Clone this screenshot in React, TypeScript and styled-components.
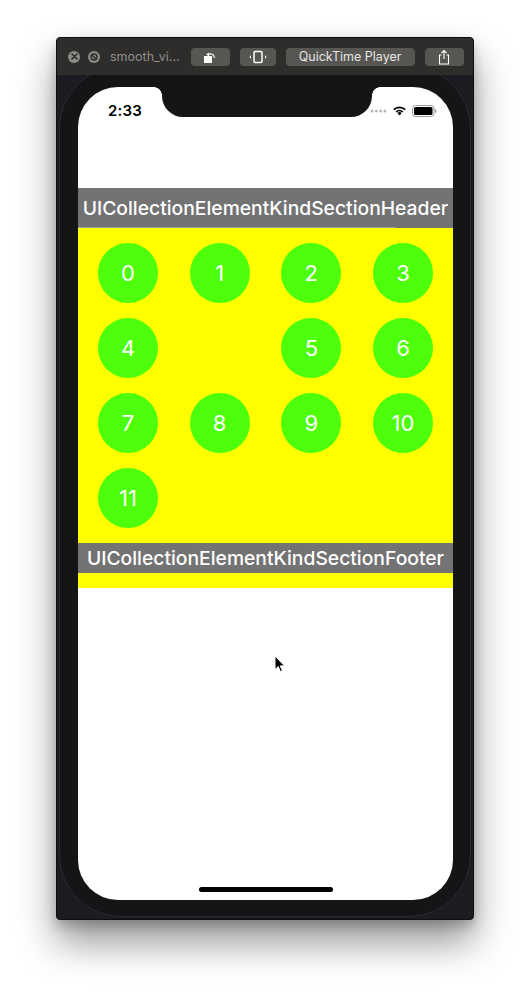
import React from "react";
import styled, { createGlobalStyle } from "styled-components";

const Global = createGlobalStyle`
  html, body { margin: 0; padding: 0; background: #ffffff; }
  body { font-family: "Inter", "Roboto", "Liberation Sans", sans-serif; }
`;

const Page = styled.div`
  width: 530px;
  height: 994px;
  padding: 37px 0 0 56px;
  box-sizing: border-box;
  background: #ffffff;
`;

const Window = styled.div`
  width: 418px;
  height: 883px;
  box-sizing: border-box;
  border: 1px solid #0e0e0e;
  border-radius: 4px;
  background: #1c1b21;
  display: flex;
  flex-direction: column;
  overflow: hidden;
  box-shadow: 0 22px 38px rgba(0, 0, 0, 0.42), 0 6px 12px rgba(0, 0, 0, 0.2);
`;

const TitleBar = styled.div`
  height: 37px;
  flex: none;
  background: #2e2d2b;
  display: flex;
  align-items: center;
  padding: 0 8px 0 11px;
  box-sizing: border-box;
  position: relative;
  z-index: 2;
`;

const Dot = styled.div`
  width: 12px;
  height: 12px;
  border-radius: 50%;
  background: #8c8b88;
  display: flex;
  align-items: center;
  justify-content: center;
  margin-right: 8px;
`;

const Title = styled.div`
  color: #8f8e8b;
  font-family: "Inter", "Liberation Sans", sans-serif;
  font-size: 12.5px;
  margin: 0 11px 0 2px;
  white-space: nowrap;
`;

const TBtn = styled.div<{ $w: number }>`
  width: ${(p) => p.$w}px;
  height: 18px;
  border-radius: 4px;
  background: #575652;
  color: #e6e5e2;
  font-family: "Inter", "Liberation Sans", sans-serif;
  font-size: 12.5px;
  display: flex;
  align-items: center;
  justify-content: center;
  margin-right: 10px;
  &:last-child { margin-right: 0; }
`;

const Bezel = styled.div`
  flex: 1;
  padding: 0 2px 2px 2px;
  display: flex;
  flex-direction: column;
  overflow: hidden;
`;

const PhoneBody = styled.div`
  flex: 1;
  margin-top: -9px;
  border: 1px solid #2c2b31;
  border-radius: 62px;
  background: #151417;
  padding: 20px 17px 16px 18px;
  display: flex;
  flex-direction: column;
`;

const Screen = styled.div`
  flex: 1;
  background: #ffffff;
  border-radius: 40px;
  overflow: hidden;
  position: relative;
  display: flex;
  flex-direction: column;
`;

const Notch = styled.div`
  position: absolute;
  top: 0;
  left: 84px;
  width: 210px;
  height: 30px;
  background: #151417;
  border-radius: 0 0 21px 21px;
  &::before, &::after {
    content: "";
    position: absolute;
    top: 0;
    width: 8px;
    height: 8px;
  }
  &::before {
    left: -8px;
    background: radial-gradient(circle at 0 100%, transparent 7.5px, #151417 8px);
  }
  &::after {
    right: -8px;
    background: radial-gradient(circle at 100% 100%, transparent 7.5px, #151417 8px);
  }
`;

const StatusBar = styled.div`
  height: 44px;
  flex: none;
  display: flex;
  align-items: center;
  justify-content: space-between;
  padding: 3px 16px 0 30px;
  box-sizing: border-box;
`;

const Time = styled.div`
  font-family: "Inter", "Liberation Sans", sans-serif;
  font-weight: 600;
  font-size: 15px;
  color: #000;
  letter-spacing: 0.2px;
`;

const StatusIcons = styled.div`
  display: flex;
  align-items: center;
  gap: 5px;
`;

const TopSpace = styled.div`
  height: 57px;
  flex: none;
`;

const SupplementaryBar = styled.div<{ $h: number }>`
  height: ${(p) => p.$h}px;
  flex: none;
  background: #737373;
  color: #ffffff;
  font-family: "Inter", "Liberation Sans", sans-serif;
  font-weight: 500;
  font-size: 19.3px;
  letter-spacing: 0;
  display: flex;
  align-items: center;
  justify-content: center;
  white-space: nowrap;
  position: relative;
`;

const HeaderLine = styled.div`
  position: absolute;
  left: 0;
  bottom: 0;
  width: 318px;
  height: 1px;
  background: #9a9a9a;
`;

const Section = styled.div`
  flex: none;
  background: #ffff00;
  padding: 15px 20px;
  display: grid;
  grid-template-columns: repeat(4, 60px);
  grid-auto-rows: 60px;
  justify-content: space-between;
  row-gap: 15px;
`;

const Cell = styled.div<{ $empty?: boolean }>`
  width: 60px;
  height: 60px;
  border-radius: 50%;
  background: ${(p) => (p.$empty ? "transparent" : "#4dff0a")};
  color: #ffffff;
  font-family: "Inter", "Liberation Sans", sans-serif;
  font-size: 22px;
  display: flex;
  align-items: center;
  justify-content: center;
`;

const FooterTail = styled.div`
  height: 15px;
  flex: none;
  background: #ffff00;
`;

const Fill = styled.div`
  flex: 1;
`;

const HomeBar = styled.div`
  width: 134px;
  height: 5px;
  border-radius: 3px;
  background: #000;
  align-self: center;
  margin-bottom: 8px;
  flex: none;
`;

const Cursor = styled.svg`
  position: absolute;
  left: 196px;
  top: 568px;
`;

const XGlyph = () => (
  <svg width="7" height="7" viewBox="0 0 7 7">
    <path d="M1 1L6 6M6 1L1 6" stroke="#2e2d2b" strokeWidth="1.6" strokeLinecap="round" />
  </svg>
);

const NoGlyph = () => (
  <svg width="8" height="8" viewBox="0 0 8 8">
    <circle cx="4" cy="4" r="3" fill="none" stroke="#2e2d2b" strokeWidth="1.4" />
    <path d="M2 2L6 6" stroke="#2e2d2b" strokeWidth="1.4" />
  </svg>
);

const RotateIcon = () => (
  <svg width="16" height="14" viewBox="0 0 16 14">
    <rect x="2" y="6" width="8" height="7" fill="#fff" />
    <path d="M6 4.5C9 3 12 4 12.5 8" fill="none" stroke="#fff" strokeWidth="1.2" />
    <path d="M4.2 4.6L7 2.6L7 6.4Z" fill="#fff" />
  </svg>
);

const VibrateIcon = () => (
  <svg width="22" height="14" viewBox="0 0 22 14">
    <rect x="7" y="1.5" width="8" height="11" rx="1.2" fill="none" stroke="#fff" strokeWidth="1.5" />
    <path d="M4 5L2.5 7L4 9Z" fill="#fff" />
    <path d="M18 5L19.5 7L18 9Z" fill="#fff" />
  </svg>
);

const ShareIcon = () => (
  <svg width="14" height="16" viewBox="0 0 14 16">
    <path d="M4.5 6H2.5V15H11.5V6H9.5" fill="none" stroke="#fff" strokeWidth="1.1" />
    <path d="M7 10V1.5M4.5 4L7 1.5L9.5 4" fill="none" stroke="#fff" strokeWidth="1.1" />
  </svg>
);

const Signal = () => (
  <svg width="17" height="4" viewBox="0 0 17 4">
    {[0, 1, 2, 3].map((i) => (
      <circle key={i} cx={2 + i * 4.3} cy={2} r={1.5} fill="#b8b8b8" />
    ))}
  </svg>
);

const Wifi = () => (
  <svg width="15" height="11" viewBox="0 0 15 11">
    <path d="M7.5 10.5L5.3 8.1A3.2 3.2 0 0 1 9.7 8.1Z" fill="#000" />
    <path d="M3.6 6.4A5.6 5.6 0 0 1 11.4 6.4L10.3 7.5A4.1 4.1 0 0 0 4.7 7.5Z" fill="#000" />
    <path d="M1.2 4.1A9 9 0 0 1 13.8 4.1L12.6 5.3A7.3 7.3 0 0 0 2.4 5.3Z" fill="#000" />
  </svg>
);

const Battery = () => (
  <svg width="25" height="12" viewBox="0 0 25 12">
    <rect x="0.5" y="0.5" width="21.5" height="11" rx="3" fill="none" stroke="#9a9a9a" strokeWidth="1" />
    <rect x="2" y="2" width="18.5" height="8" rx="1.6" fill="#000" />
    <path d="M23 4V8C24 7.7 24.3 7 24.3 6C24.3 5 24 4.3 23 4Z" fill="#9a9a9a" />
  </svg>
);

const items: (number | null)[] = [0, 1, 2, 3, 4, null, 5, 6, 7, 8, 9, 10, 11];

export default function App() {
  return (
    <>
      <Global />
      <Page>
        <Window>
          <TitleBar>
            <Dot><XGlyph /></Dot>
            <Dot><NoGlyph /></Dot>
            <Title>smooth_vi...</Title>
            <TBtn $w={39}><RotateIcon /></TBtn>
            <TBtn $w={36}><VibrateIcon /></TBtn>
            <TBtn $w={129}>QuickTime Player</TBtn>
            <TBtn $w={39}><ShareIcon /></TBtn>
          </TitleBar>
          <Bezel>
            <PhoneBody>
              <Screen>
                <StatusBar>
                  <Time>2:33</Time>
                  <StatusIcons>
                    <Signal />
                    <Wifi />
                    <Battery />
                  </StatusIcons>
                </StatusBar>
                <Notch />
                <TopSpace />
                <SupplementaryBar $h={40}>
                  UICollectionElementKindSectionHeader
                  <HeaderLine />
                </SupplementaryBar>
                <Section>
                  {items.map((n, i) =>
                    n === null ? <Cell key={i} $empty /> : <Cell key={i}>{n}</Cell>
                  )}
                </Section>
                <SupplementaryBar $h={30}>UICollectionElementKindSectionFooter</SupplementaryBar>
                <FooterTail />
                <Fill />
                <HomeBar />
                <Cursor width="12" height="18" viewBox="0 0 12 18">
                  <path d="M1 1V14.5L4.2 11.6L6.4 16.6L8.4 15.7L6.3 10.9H10.6Z" fill="#000" stroke="#fff" strokeWidth="1" strokeLinejoin="round" />
                </Cursor>
              </Screen>
            </PhoneBody>
          </Bezel>
        </Window>
      </Page>
    </>
  );
}
